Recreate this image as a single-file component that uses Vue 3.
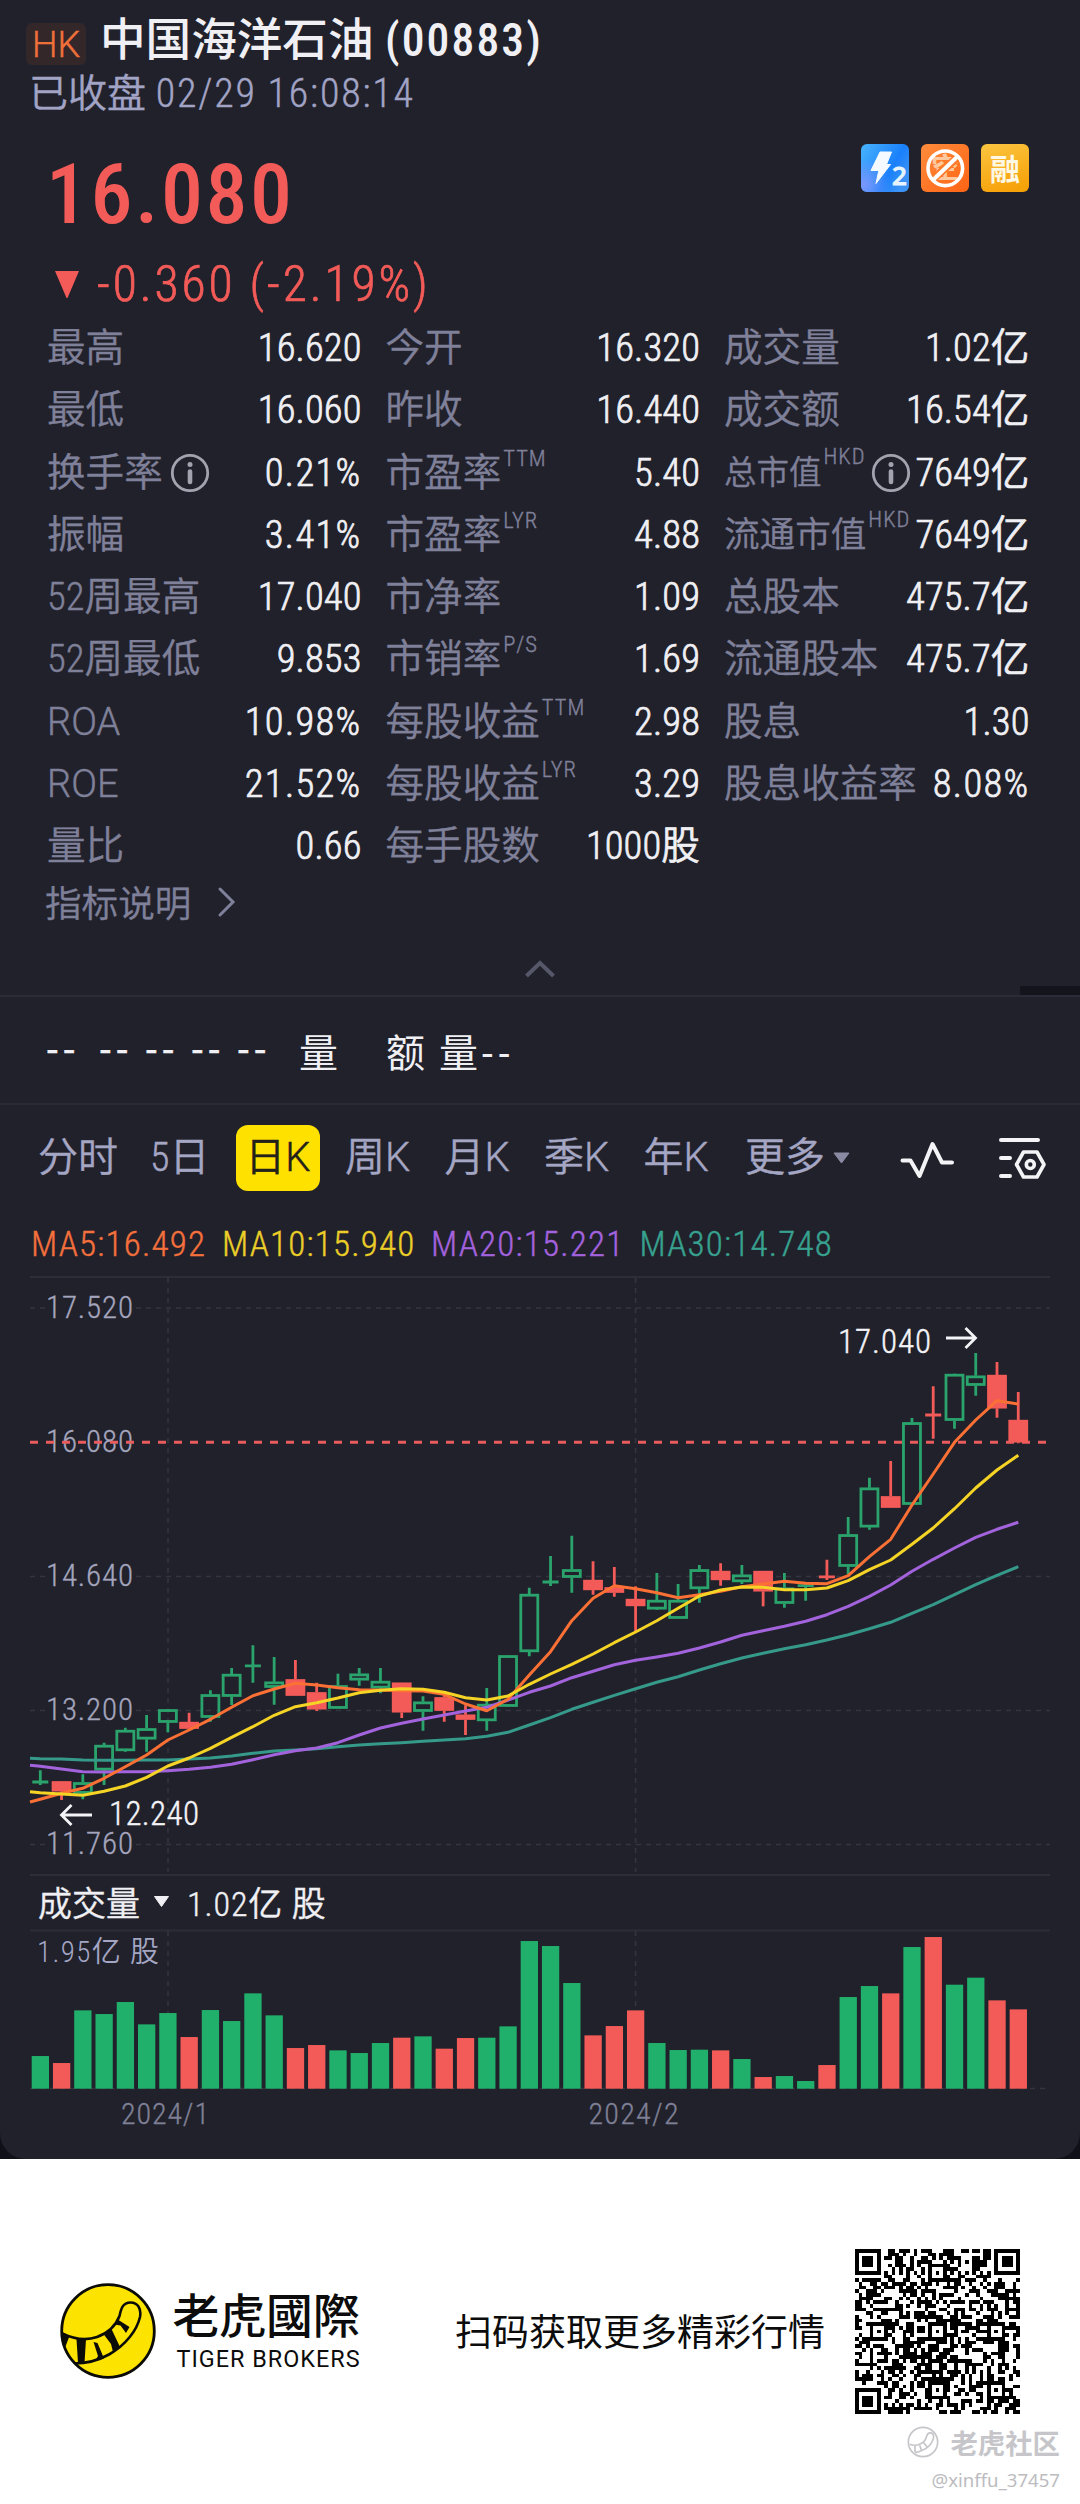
<script setup>
const rows = [
  [
    { label: '最高', value: '16.620' },
    { label: '今开', value: '16.320' },
    { label: '成交量', value: '1.02亿' },
  ],
  [
    { label: '最低', value: '16.060' },
    { label: '昨收', value: '16.440' },
    { label: '成交额', value: '16.54亿' },
  ],
  [
    { label: '换手率', value: '0.21%', info: true },
    { label: '市盈率', sup: 'TTM', value: '5.40' },
    { label: '总市值', sup: 'HKD', value: '7649亿', info: true, size: 'small' },
  ],
  [
    { label: '振幅', value: '3.41%' },
    { label: '市盈率', sup: 'LYR', value: '4.88' },
    { label: '流通市值', sup: 'HKD', value: '7649亿', size: 'medium' },
  ],
  [
    { label: '52周最高', value: '17.040' },
    { label: '市净率', value: '1.09' },
    { label: '总股本', value: '475.7亿' },
  ],
  [
    { label: '52周最低', value: '9.853' },
    { label: '市销率', sup: 'P/S', value: '1.69' },
    { label: '流通股本', value: '475.7亿' },
  ],
  [
    { label: 'ROA', value: '10.98%', size: 'latin' },
    { label: '每股收益', sup: 'TTM', value: '2.98' },
    { label: '股息', value: '1.30' },
  ],
  [
    { label: 'ROE', value: '21.52%', size: 'latin' },
    { label: '每股收益', sup: 'LYR', value: '3.29' },
    { label: '股息收益率', value: '8.08%' },
  ],
  [
    { label: '量比', value: '0.66' },
    { label: '每手股数', value: '1000股' },
  ],
]

const tabs = [
  { text: '分时' },
  { text: '5日' },
  { text: '日', unit: 'K', active: true },
  { text: '周', unit: 'K' },
  { text: '月', unit: 'K' },
  { text: '季', unit: 'K' },
  { text: '年', unit: 'K' },
]

// Horizontal position of the i-th trading day
const cx = (i) => 40.3 + i * 21.26
// Vertical chart units are thirds of a pixel
const cy = (v) => v / 3 + 4

// [direction, high, body top, body bottom, low]
const candles = [
  ['g', 1471, 1503, 1509, 1515], ['r', 1504, 1504, 1534, 1560], ['g', 1483, 1507, 1541, 1558],
  ['g', 1388, 1395, 1471, 1515], ['g', 1343, 1350, 1413, 1415], ['g', 1305, 1345, 1378, 1415],
  ['g', 1287, 1288, 1328, 1357], ['r', 1298, 1326, 1346, 1350], ['g', 1231, 1243, 1313, 1325],
  ['g', 1164, 1182, 1250, 1275], ['g', 1096, 1155, 1160, 1208], ['g', 1131, 1205, 1223, 1274],
  ['r', 1140, 1198, 1247, 1247], ['r', 1208, 1237, 1288, 1293], ['g', 1181, 1216, 1286, 1286],
  ['g', 1164, 1181, 1201, 1217], ['g', 1164, 1203, 1225, 1240], ['r', 1208, 1208, 1297, 1314],
  ['g', 1249, 1265, 1295, 1352], ['r', 1235, 1252, 1292, 1325], ['r', 1276, 1304, 1319, 1365],
  ['g', 1224, 1272, 1323, 1352], ['g', 1125, 1126, 1280, 1280], ['g', 923, 942, 1116, 1129],
  ['g', 828, 903, 909, 918], ['g', 767, 868, 893, 938], ['r', 844, 900, 930, 944],
  ['r', 861, 922, 938, 950], ['r', 919, 957, 978, 1054], ['g', 879, 960, 988, 990],
  ['g', 912, 960, 1016, 1016], ['g', 855, 868, 927, 968], ['r', 850, 873, 900, 917],
  ['g', 855, 884, 906, 912], ['r', 873, 873, 934, 979], ['g', 879, 923, 971, 983],
  ['g', 906, 914, 920, 962], ['r', 839, 888, 893, 900], ['g', 711, 763, 860, 883],
  ['g', 593, 623, 742, 749], ['r', 543, 649, 683, 683], ['g', 414, 427, 674, 674],
  ['r', 319, 403, 407, 476], ['g', 281, 282, 422, 446], ['g', 219, 287, 317, 347],
  ['r', 246, 285, 385, 413], ['r', 336, 420, 487, 490],
].map(([dir, high, top, bottom, low], i) => ({
  dir,
  x: cx(i),
  high: cy(high),
  top: cy(top),
  bottom: cy(bottom),
  low: cy(low),
  flat: bottom - top < 8,
}))

// The first value of each average sits on the left edge of the plot
const averages = [
  {
    name: 'ma30',
    values: [1435, 1436, 1437, 1440, 1441, 1441, 1440, 1440, 1437, 1434, 1428, 1420, 1413, 1410, 1406, 1400, 1395, 1391, 1388, 1384, 1380, 1376, 1369, 1357, 1335, 1313, 1288, 1267, 1246, 1226, 1207, 1190, 1170, 1151, 1134, 1120, 1106, 1094, 1080, 1064, 1046, 1027, 1000, 974, 944, 914, 886, 860],
  },
  {
    name: 'ma20',
    values: [1456, 1459, 1467, 1475, 1476, 1475, 1475, 1472, 1468, 1462, 1453, 1439, 1424, 1412, 1404, 1388, 1365, 1344, 1330, 1317, 1305, 1293, 1282, 1260, 1237, 1218, 1193, 1174, 1154, 1141, 1131, 1120, 1104, 1086, 1066, 1052, 1039, 1024, 1004, 979, 949, 915, 874, 838, 804, 772, 748, 727],
  },
  {
    name: 'ma5',
    values: [1566, 1558, 1540, 1525, 1495, 1460, 1425, 1380, 1350, 1318, 1282, 1247, 1227, 1210, 1215, 1223, 1229, 1230, 1232, 1233, 1243, 1272, 1292, 1258, 1185, 1115, 1022, 955, 917, 926, 938, 953, 944, 934, 920, 912, 904, 910, 911, 887, 830, 778, 675, 582, 487, 420, 362, 372],
  },
  {
    name: 'ma10',
    values: [1535, 1538, 1542, 1546, 1534, 1518, 1492, 1458, 1434, 1405, 1372, 1340, 1306, 1280, 1268, 1254, 1238, 1231, 1226, 1228, 1237, 1253, 1260, 1248, 1213, 1182, 1153, 1122, 1088, 1056, 1022, 985, 948, 930, 921, 922, 929, 929, 924, 902, 869, 840, 793, 744, 686, 624, 570, 526],
  },
].map(({ name, values }) => ({
  name,
  points: values.map((v, i) => `${i === 0 ? 30 : cx(i - 1).toFixed(1)},${cy(v).toFixed(1)}`).join(' '),
}))

const gridLines = [
  { y: 32, label: '17.520' },
  { y: 300.5, label: '14.640' },
  { y: 434.5, label: '13.200' },
  { y: 568.5, label: '11.760' },
]

const volumes = [
  98, -77, 235, 224, 260, 193, 227, -155, 236, 203, 286, 220, -122, -131, 115, 107, 137, -153, 157,
  -120, -152, 153, 187, 443, 428, 317, -160, -188, -235, 137, 116, 117, -115, 89, -35, 38, 23, -71,
  275, 308, -286, 425, -455, 312, 333, -265, -238,
].map((v, i) => ({ x: cx(i) - 8.6, h: Math.abs(v) / 3, dir: v > 0 ? 'g' : 'r' }))

// 45x45 code: finder, alignment and timing patterns around a data field
const SIZE = 45
const ring = (dx, dy) => Math.max(Math.abs(dx), Math.abs(dy))
let seed = 883
const next = () => {
  seed = (seed * 1103515245 + 12345) % 2147483648
  return seed / 2147483648
}
const dark = (x, y, noise) => {
  for (const [fx, fy] of [[3, 3], [41, 3], [3, 41]]) {
    const r = ring(x - fx, y - fy)
    if (r <= 4) return r !== 2 && r !== 4
  }
  for (const [ax, ay] of [[22, 6], [6, 22], [22, 22], [38, 22], [22, 38], [38, 38]]) {
    const r = ring(x - ax, y - ay)
    if (r <= 2) return r !== 1
  }
  if (x === 6 || y === 6) return (x + y) % 2 === 0
  return noise > 0.49
}
let qrPath = ''
for (let y = 0; y < SIZE; y++) {
  for (let x = 0; x < SIZE; x++) {
    if (dark(x, y, next())) qrPath += `M${x} ${y}h1v1h-1z`
  }
}
</script>

<template>
  <div class="page">
    <div class="backdrop">
      <main class="panel">
        <header class="title">
          <span class="market">HK</span>
          <h1>中国海洋石油 <span class="code">(00883)</span></h1>
        </header>
        <div class="status">已收盘 <span>02/29 16:08:14</span></div>

        <div class="price-row">
          <div class="price">16.080</div>
          <div class="tags">
            <svg width="48" height="48" viewBox="0 0 48 48">
              <defs>
                <linearGradient id="blue" x1="0" y1="0" x2="1" y2="0.6">
                  <stop offset="0" stop-color="#48b4fd" />
                  <stop offset="0.7" stop-color="#1a80fb" />
                  <stop offset="1" stop-color="#3b93f5" />
                </linearGradient>
                <radialGradient id="violet" cx="0.05" cy="0.85" r="0.55">
                  <stop offset="0" stop-color="#7b97fb" />
                  <stop offset="1" stop-color="#7b97fb" stop-opacity="0" />
                </radialGradient>
              </defs>
              <rect width="48" height="48" rx="6" fill="url(#blue)" />
              <rect width="48" height="48" rx="6" fill="url(#violet)" />
              <path d="M19 8H30.500L25.500 20.500H29.500L15 39.500L17.800 26.500H10Z" fill="#f4faff" stroke="#f4faff" stroke-linejoin="round" />
              <text x="31" y="41" class="tag-two">2</text>
            </svg>
            <svg width="48" height="48" viewBox="0 0 48 48">
              <defs>
                <linearGradient id="orange" x1="0" y1="0" x2="1" y2="1">
                  <stop offset="0" stop-color="#ff8c3c" />
                  <stop offset="1" stop-color="#ff6414" />
                </linearGradient>
              </defs>
              <rect width="48" height="48" rx="6" fill="url(#orange)" />
              <text x="24.300" y="34" class="tag-short">空</text>
              <path d="M12 35L37 13" stroke="#ff7a2a" stroke-width="8" />
              <circle cx="24.300" cy="24.300" r="17.300" fill="none" stroke="#fff" stroke-width="3.600" />
              <path d="M12 36L36.500 12.500" stroke="#fff" stroke-width="4" />
            </svg>
            <svg width="48" height="48" viewBox="0 0 48 48">
              <defs>
                <linearGradient id="amber" x1="0.300" y1="0" x2="0.600" y2="1">
                  <stop offset="0" stop-color="#fbc23c" />
                  <stop offset="1" stop-color="#f7a108" />
                </linearGradient>
              </defs>
              <rect width="48" height="48" rx="6" fill="url(#amber)" />
              <text x="24" y="35.500" class="tag-margin">融</text>
            </svg>
          </div>
        </div>
        <div class="change">
          <svg width="26" height="29" viewBox="0 0 26 29"><path d="M1 1H25L13.500 28H12.500Z" fill="currentColor" /></svg>
          <span>-0.360 (-2.19%)</span>
        </div>

        <section class="stats">
          <div v-for="(row, r) in rows" :key="r" class="stats-row">
            <div v-for="cell in row" :key="cell.label + cell.sup" class="cell">
              <span class="label" :class="cell.size">{{ cell.label }}<sup v-if="cell.sup">{{ cell.sup }}</sup></span>
              <svg v-if="cell.info" class="info" :class="cell.size" width="40" height="40" viewBox="0 0 40 40">
                <circle cx="20" cy="20" r="17.700" fill="none" stroke="currentColor" stroke-width="2.800" />
                <circle cx="20" cy="11.500" r="2.500" fill="currentColor" />
                <path d="M20 18.500V29" stroke="currentColor" stroke-width="4.600" stroke-linecap="round" />
              </svg>
              <span class="value" :class="{ percent: cell.value.endsWith('%') }">{{ cell.value }}</span>
            </div>
          </div>
        </section>

        <div class="explain">
          指标说明
          <svg width="20" height="32" viewBox="0 0 20 32"><path d="M3 3L16 16L3 29" fill="none" stroke="currentColor" stroke-width="3" stroke-linecap="round" /></svg>
        </div>
        <div class="collapse">
          <svg width="32" height="20" viewBox="0 0 32 20"><path d="M2.500 17L16 4L29.500 17" fill="none" stroke="currentColor" stroke-width="4" /></svg>
          <i class="handle"></i>
        </div>

        <div class="quote">
          <span>--</span><span>--</span><span>--</span><span>--</span><span>--</span>
          <b>量</b><b>额</b><b>量<span>--</span></b>
        </div>

        <nav class="tabs">
          <span v-for="tab in tabs" :key="tab.text" class="tab" :class="{ active: tab.active }">{{ tab.text }}<i v-if="tab.unit">{{ tab.unit }}</i></span>
          <span class="tab more">更多<svg width="17" height="12" viewBox="0 0 17 12"><path d="M1 1H16L8.500 11Z" fill="currentColor" stroke="currentColor" stroke-linejoin="round" /></svg></span>
          <svg class="pulse" width="56" height="40" viewBox="0 0 56 40">
            <path d="M2.500 20.500H10.500L19.500 36L32.500 4L42 22.500H52" fill="none" stroke="#f4f4f6" stroke-width="4" stroke-linecap="round" stroke-linejoin="round" />
          </svg>
          <svg class="config" width="50" height="44" viewBox="0 0 50 44">
            <g fill="none" stroke="#f4f4f6" stroke-width="4" stroke-linecap="round" stroke-linejoin="round">
              <path d="M3 3H40M3 21H12M3 39H12" />
              <path d="M25.500 15H39L46 27.500L39 40H25.500L18.500 27.500Z" stroke-width="3.600" />
              <circle cx="32.300" cy="27.500" r="4" stroke-width="3.600" />
            </g>
          </svg>
        </nav>

        <div class="ma-legend">
          <span class="ma5">MA5:16.492</span>
          <span class="ma10">MA10:15.940</span>
          <span class="ma20">MA20:15.221</span>
          <span class="ma30">MA30:14.748</span>
        </div>

        <svg class="chart" width="1080" height="600" viewBox="0 0 1080 600">
          <g class="rule">
            <path d="M30 1H1050M30 599H1050" />
          </g>
          <g class="grid">
            <path d="M168 2V596M635.600 2V596" />
            <path v-for="line in gridLines" :key="line.y" :d="`M30 ${line.y}H46M136 ${line.y}H1050`" />
          </g>
          <g class="axis">
            <text v-for="line in gridLines" :key="line.label" x="46" :y="line.y + 9.500" textLength="87">{{ line.label }}</text>
            <text x="46" y="175.500" textLength="87">16.080</text>
          </g>
          <path class="last-price" d="M30 166.300H1050" />
          <g v-for="c in candles" :key="c.x" class="candle" :class="c.dir">
            <path v-if="c.flat" :d="`M${c.x} ${c.high}V${c.low}M${c.x - 8} ${(c.top + c.bottom) / 2}h16`" />
            <template v-else>
              <path :d="`M${c.x} ${c.high}V${c.top}M${c.x} ${c.bottom}V${c.low}`" />
              <rect :x="c.x - 8.500" :y="c.top + 1.200" width="17" :height="c.bottom - c.top - 2.400" />
            </template>
          </g>
          <polyline v-for="line in averages" :key="line.name" class="average" :class="line.name" :points="line.points" />
          <g class="marker">
            <text x="109" y="549" textLength="90">12.240</text>
            <path d="M92 539H62M71.500 529L61.500 539L71.500 549" />
            <text x="838" y="76.700" textLength="93">17.040</text>
            <path d="M946 62H975M965.500 52L975.500 62L965.500 72" />
          </g>
        </svg>

        <div class="volume-head">
          成交量
          <svg width="17" height="13" viewBox="0 0 17 13"><path d="M1.500 1.500H15.500L8.500 11.500Z" fill="currentColor" stroke="currentColor" stroke-linejoin="round" /></svg>
          <span>1.02亿 股</span>
        </div>

        <svg class="chart" width="1080" height="230" viewBox="0 0 1080 230">
          <g class="rule"><path d="M30 1.500H1050" /></g>
          <g class="grid"><path d="M168 2V159M635.600 2V159M30 159.500H1050" /></g>
          <text class="volume-max" x="37" y="32.500" textLength="122">1.95亿 股</text>
          <rect v-for="v in volumes" :key="v.x" class="bar" :class="v.dir" :x="v.x" :y="159.700 - v.h" width="17.300" :height="v.h" />
          <g class="dates">
            <text x="121" y="195" textLength="88">2024/1</text>
            <text x="588.500" y="195" textLength="90">2024/2</text>
          </g>
        </svg>
      </main>
    </div>

    <footer class="footer">
      <div class="brand-row">
        <svg class="logo" width="96" height="96" viewBox="0 0 96 96">
          <defs><clipPath id="disc"><circle cx="48" cy="48" r="46" /></clipPath></defs>
          <circle cx="48" cy="48" r="46.500" fill="#fde300" />
          <g clip-path="url(#disc)" fill="#0b0b08">
            <path d="M0 49.500C14 56.500 27 57.500 37 54C48 50 56 42 59.500 33C61 26 62.500 19.500 70.500 19.500C78 19.500 81.500 26 80 34C77 47 66 62 49 71.500C39 77 28 80.500 14 80.500" fill="none" stroke="#0b0b08" stroke-width="2.600" />
            <path d="M0 48L9.500 53L4.500 66L0 64Z" />
            <path d="M16.500 56H26L24.500 80H18Z" />
            <path d="M33.500 59L37.500 60L44 75.500L35 78L38 73Z" />
            <path d="M43.500 51L51.500 46L60 64L53 69L51 61Z" />
            <path d="M54 41.500L58.500 37L69.500 44L66 50L60.500 42.500Z" />
          </g>
          <circle cx="48" cy="48" r="46.300" fill="none" stroke="#0b0b08" stroke-width="2.800" />
        </svg>
        <div class="brand">
          <strong>老虎國際</strong>
          <small>TIGER BROKERS</small>
        </div>
        <p class="slogan">扫码获取更多精彩行情</p>
        <svg class="qr" width="165" height="165" viewBox="0 0 45 45" shape-rendering="crispEdges"><path :d="qrPath" fill="#000" /></svg>
      </div>
      <div class="community">
        <div class="community-name">
          <svg width="32" height="32" viewBox="0 0 96 96" fill="none" stroke="#c6c6ca" stroke-width="5">
            <circle cx="48" cy="48" r="44" />
            <path d="M8 55C27 62 52 55 58 34C61 16 80 16 80 34C76 52 60 72 24 80M24 58V78M38 58L44 74M50 50L60 62" />
          </svg>
          <span>老虎社区</span>
        </div>
        <div class="community-user">@xinffu_37457</div>
      </div>
    </footer>
  </div>
</template>

<style>
body {
  margin: 0;
}
</style>

<style scoped>
.page {
  width: 1080px;
  height: 2504px;
  overflow: hidden;
  display: flex;
  flex-direction: column;
  background: #fff;
  font-family: "Roboto Condensed", "Noto Sans CJK SC", sans-serif;
  color: #f0f0f4;
}
.page svg {
  display: block;
  flex: none;
}
.backdrop {
  background: #101019;
}
.panel {
  height: 2159px;
  box-sizing: border-box;
  padding-top: 10px;
  background: #21212b;
  border-radius: 0 0 26px 26px;
  overflow: hidden;
  font-weight: 350;
  -webkit-text-stroke: 0.4px currentColor;
}
.title {
  display: flex;
  align-items: center;
  height: 62px;
  padding-left: 26px;
}
.market {
  width: 60px;
  height: 42px;
  margin: 6px 14px 0 0;
  border-radius: 6px;
  background: #33272a;
  color: #f0703a;
  font-size: 36px;
  font-family: Roboto, sans-serif;
  font-weight: 300;
  line-height: 44px;
  text-align: center;
}
h1 {
  margin: 0;
  font-size: 45.6px;
  line-height: 62px;
  font-weight: 500;
  white-space: pre;
  -webkit-text-stroke: 0;
}
.code {
  margin-left: 1px;
  letter-spacing: 2.1px;
}
.status {
  height: 44px;
  padding-left: 29px;
  font-size: 39px;
  line-height: 44px;
  color: #a2a4c5;
}
.status span {
  margin-left: 1px;
  font-size: 40px;
  letter-spacing: 1.8px;
}
.price-row {
  display: flex;
  justify-content: space-between;
  align-items: flex-start;
  margin-top: 28px;
  height: 100px;
  padding: 0 51px 0 46px;
  -webkit-text-stroke: 0;
}
.price {
  font-size: 84px;
  line-height: 102px;
  font-weight: 500;
  letter-spacing: 2.5px;
  color: #f35b58;
}
.tags {
  display: flex;
  gap: 12px;
}
.tag-two {
  font: 500 26px "Noto Sans", sans-serif;
  fill: #e6f4ff;
  stroke: #e6f4ff;
}
.tag-short {
  font: 700 28px "Noto Sans CJK SC", sans-serif;
  text-anchor: middle;
  fill: #ffc9a0;
}
.tag-margin {
  font: 700 30px "Noto Sans CJK SC", sans-serif;
  text-anchor: middle;
  fill: #fff8e4;
}
.change {
  display: flex;
  align-items: center;
  height: 73px;
  box-sizing: border-box;
  padding: 7px 0 0 54px;
  color: #f35b58;
}
.change span {
  margin-left: 17px;
  font-size: 49.6px;
  letter-spacing: 2.9px;
  -webkit-text-stroke: 0.7px currentColor;
}
.stats {
  padding-left: 47px;
}
.stats-row {
  display: grid;
  grid-template-columns: 314.5px 314.5px 305.5px;
  column-gap: 24px;
  height: 62.25px;
}
.cell {
  display: flex;
  align-items: center;
  font-size: 38.6px;
  line-height: 62.25px;
  white-space: nowrap;
}
.label {
  color: #7f8099;
}
.label.small {
  font-size: 32.5px;
}
.label.medium {
  font-size: 35.6px;
}
.label.latin {
  font-family: Roboto, sans-serif;
  font-weight: 300;
  font-size: 38px;
}
.label sup {
  margin-left: 2px;
  font-size: 22.5px;
  font-weight: 300;
  line-height: 0;
  letter-spacing: 1px;
  vertical-align: 20px;
}
.value {
  margin-left: auto;
  letter-spacing: 0.1px;
  -webkit-text-stroke: 0.7px currentColor;
}
.value.percent {
  letter-spacing: 1.3px;
}
.info {
  margin-left: 7px;
  color: #a3a3af;
}
.info.small {
  margin-left: 5px;
}
.explain {
  display: flex;
  align-items: center;
  gap: 26px;
  height: 49px;
  padding-left: 45px;
  font-size: 36.6px;
  color: #7f8099;
}
.collapse {
  position: relative;
  display: flex;
  justify-content: center;
  align-items: flex-start;
  height: 70.7px;
  box-sizing: border-box;
  padding-top: 33px;
  border-bottom: 2px solid #2a2b36;
  color: #565768;
}
.handle {
  position: absolute;
  right: 0;
  bottom: 0;
  width: 60px;
  height: 9px;
  background: #14141d;
}
.quote {
  display: flex;
  align-items: center;
  height: 108px;
  box-sizing: border-box;
  padding-left: 47px;
  border-bottom: 2px solid #2a2b36;
  font-size: 39px;
}
.quote span {
  width: 46px;
  font-family: Roboto, sans-serif;
  font-weight: 400;
  letter-spacing: 6px;
}
.quote > span:first-child {
  width: 53px;
}
.quote b {
  font-weight: 400;
  -webkit-text-stroke: 0;
}
.quote b span {
  margin-left: 4px;
}
.quote b:nth-of-type(1) {
  width: 87px;
  margin-left: 15px;
}
.quote b:nth-of-type(2) {
  width: 53px;
}
.tabs {
  display: grid;
  grid-template-columns: 112px 86px 109px 99.5px 99.5px 99.5px 101.5px 155px 98px 50px;
  align-items: center;
  height: 106px;
  padding-left: 38px;
  font-size: 40px;
  line-height: 66px;
  color: #a4a6c4;
}
.tab i {
  font-family: Roboto, sans-serif;
  font-style: normal;
  font-weight: 300;
}
.tab.active {
  width: 84px;
  border-radius: 12px;
  background: #ffe100;
  color: #23211a;
  text-align: center;
}
.more {
  display: flex;
  align-items: center;
  gap: 8px;
}
.more svg {
  color: #8a8ba3;
}
.pulse {
  margin-top: 4px;
}
.config {
  margin-top: 3px;
}
.ma-legend {
  display: grid;
  grid-template-columns: 191px 209px 208.5px auto;
  height: 65px;
  padding-left: 31px;
  font-size: 35px;
  line-height: 67px;
  letter-spacing: 1.2px;
}
.ma-legend .ma5 {
  color: #f4703c;
}
.ma-legend .ma10 {
  color: #ecce28;
}
.ma-legend .ma20 {
  color: #a362de;
}
.ma-legend .ma30 {
  color: #37a28f;
}
.rule path {
  stroke: #2c2d38;
  stroke-width: 2;
}
.grid path {
  stroke: #34353f;
  stroke-width: 1.6;
  stroke-dasharray: 5 5;
}
.axis text {
  font-size: 31px;
  fill: #a4a5bd;
  stroke: #a4a5bd;
  stroke-width: 0.3px;
}
.last-price {
  stroke: #e95c5e;
  stroke-width: 3;
  stroke-dasharray: 8 8;
}
.candle path,
.candle rect {
  stroke-width: 2.8;
  fill: none;
}
.candle.g path,
.candle.g rect {
  stroke: #2aa46c;
}
.candle.r path,
.candle.r rect {
  stroke: #f35b58;
}
.candle.r rect {
  fill: #f35b58;
}
.average {
  fill: none;
  stroke-width: 3;
  stroke-linejoin: round;
}
.average.ma5 {
  stroke: #fb7034;
}
.average.ma10 {
  stroke: #f6d426;
}
.average.ma20 {
  stroke: #a263dc;
}
.average.ma30 {
  stroke: #369a8b;
}
.marker text {
  font-size: 33px;
  fill: #f4f4f8;
  stroke: #f4f4f8;
  stroke-width: 0.4px;
}
.marker path {
  fill: none;
  stroke: #f4f4f8;
  stroke-width: 2.8;
}
.volume-head {
  display: flex;
  align-items: center;
  height: 53px;
  box-sizing: border-box;
  padding: 0 0 2px 38px;
  font-size: 34px;
}
.volume-head svg {
  margin: 0 17px 0 13px;
}
.volume-head span {
  letter-spacing: 0.9px;
}
.volume-max {
  font-size: 29px;
  fill: #a4a6c4;
}
.bar.g {
  fill: #20b06b;
}
.bar.r {
  fill: #f35b58;
}
.dates text {
  font-size: 30px;
  fill: #7f8096;
  stroke: #7f8096;
  stroke-width: 0.3px;
}
.footer {
  position: relative;
  flex: 1;
  color: #0c0c0c;
}
.brand-row {
  display: flex;
  align-items: center;
  height: 165px;
  margin: 89.7px 0 0 60px;
}
.brand {
  display: flex;
  flex-direction: column;
  width: 187px;
  margin-left: 17.5px;
}
.brand strong {
  font: 500 46.8px/52px "Noto Sans CJK TC", sans-serif;
  margin-left: -1px;
}
.brand small {
  margin: 4px 0 0 3px;
  font: 400 23.4px/32px Roboto, sans-serif;
  letter-spacing: 1px;
  white-space: nowrap;
}
.slogan {
  width: 400px;
  margin: -2px 0 0 94.5px;
  font-size: 37px;
  white-space: nowrap;
}
.community {
  display: flex;
  flex-direction: column;
  align-items: flex-end;
  margin: 9px 20px 0 0;
}
.community-name {
  display: flex;
  align-items: center;
  gap: 11px;
  height: 38px;
  font-size: 27.4px;
  font-weight: 700;
  color: #c6c6ca;
}
.community-user {
  height: 32px;
  margin-top: 3px;
  font: 400 18.6px/32px "Noto Sans", sans-serif;
  color: #bcbcc0;
}
</style>
